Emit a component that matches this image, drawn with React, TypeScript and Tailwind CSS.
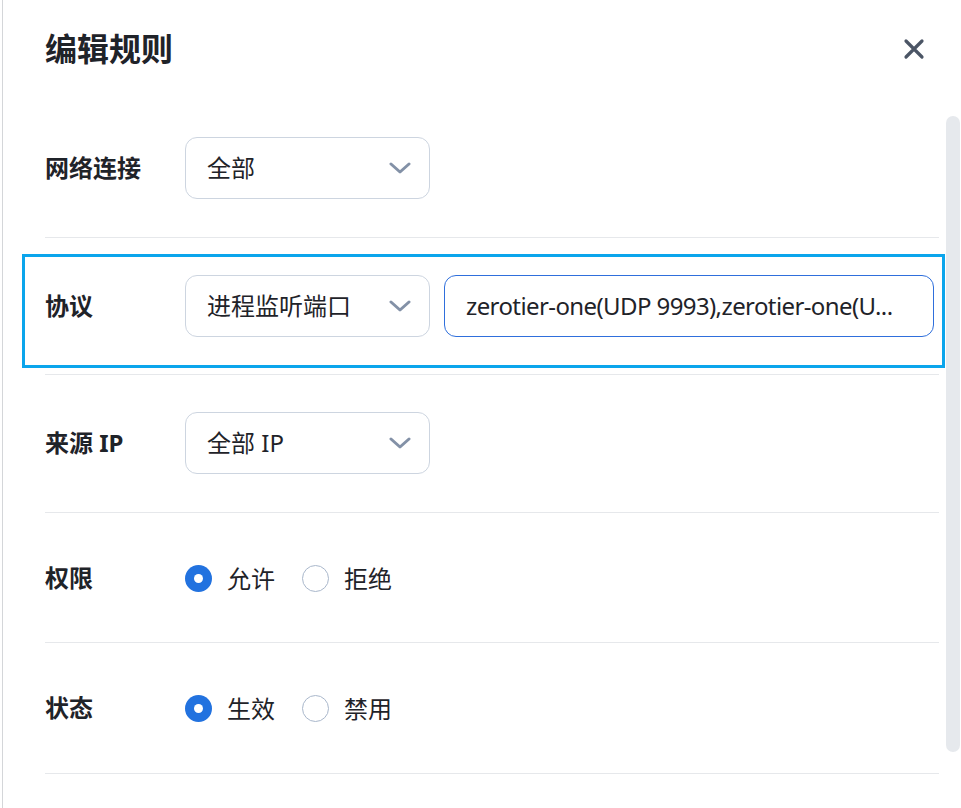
import React from "react";

const Chevron = () => (
  <svg width="22" height="12" viewBox="0 0 22 12" fill="none">
    <path d="M2 2 L11 10 L20 2" stroke="#8391a7" strokeWidth="3" strokeLinecap="round" strokeLinejoin="round" />
  </svg>
);

function Select({ value }: { value: string }) {
  return (
    <div className="flex h-[62px] w-[245px] shrink-0 items-center justify-between rounded-[12px] border border-[#cdd5e0] bg-white pl-[21px] pr-[18px]">
      <span className="text-[24px] leading-[30px] text-[#1f2329]">{value}</span>
      <Chevron />
    </div>
  );
}

function Radio({ checked, label }: { checked: boolean; label: string }) {
  return (
    <div className="flex items-center gap-[15px]">
      {checked ? (
        <div className="flex h-[27px] w-[27px] items-center justify-center rounded-full bg-[#2272df]">
          <div className="h-[9px] w-[9px] rounded-full bg-white" />
        </div>
      ) : (
        <div className="h-[27px] w-[27px] rounded-full border border-[#a9b7cb] bg-white" />
      )}
      <span className="text-[24px] leading-[27px] text-[#1f2329]">{label}</span>
    </div>
  );
}

function Label({ children }: { children: React.ReactNode }) {
  return (
    <div className="w-[140px] shrink-0 text-[24px] font-bold leading-[30px] text-[#1f2329]">{children}</div>
  );
}

export default function App() {
  return (
    <div className="flex h-[808px] w-[961px] overflow-hidden bg-white font-['Noto_Sans','Noto_Sans_CJK_SC',sans-serif]">
      <div className="w-[2px] shrink-0 bg-white" />
      <div className="flex flex-1 flex-col border-l border-[#d4d6d9]">
        <div className="flex h-[100px] shrink-0 items-start justify-between pl-[42px] pr-[36px] pt-[33px]">
          <h1 className="text-[32px] font-bold leading-[32px] text-[#1f2329]">编辑规则</h1>
          <button className="mt-[5px]" aria-label="close">
            <svg width="22" height="22" viewBox="0 0 22 22" fill="none">
              <path d="M3 3 L19 19 M19 3 L3 19" stroke="#4b5565" strokeWidth="3.2" strokeLinecap="round" />
            </svg>
          </button>
        </div>
        <div className="flex">
          <div className="ml-[42px] w-[894px]">
            <div className="flex items-center border-b border-[#e6e8eb] pb-[38px] pt-[37px]">
              <Label>网络连接</Label>
              <Select value="全部" />
            </div>
            <div className="relative flex items-center border-b border-[#e6e8eb] py-[37px]">
              <div className="pointer-events-none absolute bottom-[6px] left-[-23px] right-[-6px] top-[16px] border-[3px] border-[#0ba5ec]" />
              <Label>协议</Label>
              <Select value="进程监听端口" />
              <div className="ml-[14px] flex h-[62px] w-[490px] items-center overflow-hidden rounded-[12px] border border-[#2f6fdc] bg-white pl-[21px] pr-[10px]">
                <span className="whitespace-nowrap text-[24px] leading-[30px] tracking-[-0.6px] text-[#1f2329]">
                  zerotier-one(UDP 9993),zerotier-one(U...
                </span>
              </div>
            </div>
            <div className="flex items-center border-b border-[#e6e8eb] pb-[38px] pt-[37px]">
              <Label>来源 IP</Label>
              <Select value="全部 IP" />
            </div>
            <div className="flex items-center border-b border-[#e6e8eb] pb-[49px] pt-[50px]">
              <Label>权限</Label>
              <div className="flex items-center gap-[27px]">
                <Radio checked label="允许" />
                <Radio checked={false} label="拒绝" />
              </div>
            </div>
            <div className="flex items-center border-b border-[#e6e8eb] py-[50px]">
              <Label>状态</Label>
              <div className="flex items-center gap-[27px]">
                <Radio checked label="生效" />
                <Radio checked={false} label="禁用" />
              </div>
            </div>
          </div>
          <div className="ml-[7px] mt-[16px] h-[636px] w-[14px] rounded-full bg-[#e6e9ed]" />
        </div>
      </div>
    </div>
  );
}
